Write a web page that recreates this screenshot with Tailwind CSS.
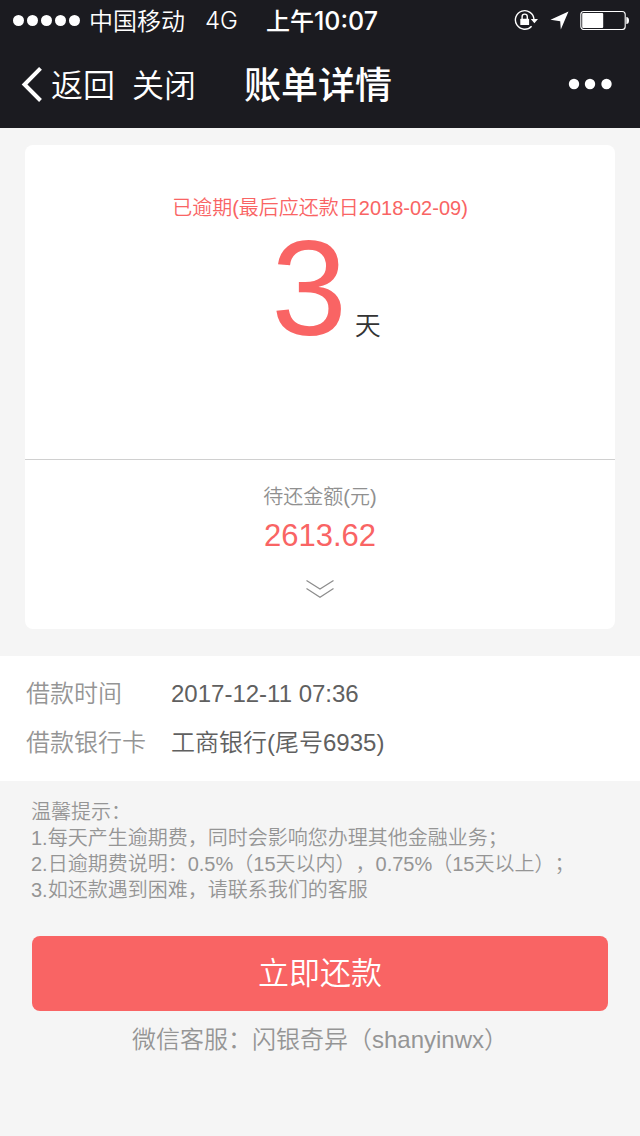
<!DOCTYPE html>
<html lang="zh-CN">
<head>
<meta charset="utf-8">
<meta name="viewport" content="width=device-width, initial-scale=1">
<title>账单详情</title>
<script src="https://cdn.jsdelivr.net/npm/@tailwindcss/browser@4"></script>
</head>
<body class="flex min-h-screen flex-col bg-[#f5f5f5] font-['Liberation_Sans','Noto_Sans_CJK_SC',sans-serif] font-[350] [text-spacing-trim:space-all]">
<header class="bg-[#1b1b20] text-white">
  <!-- status bar -->
  <div class="flex h-10 items-center px-3 font-['Inter','Noto_Sans_CJK_SC',sans-serif] text-2xl leading-8">
    <svg class="mr-2 h-3 w-[69px]" viewBox="0 0 69 12" fill="currentColor" aria-hidden="true"><circle cx="6.500" cy="6.500" r="5.500"/><circle cx="20.500" cy="6.500" r="5.500"/><circle cx="34.500" cy="6.500" r="5.500"/><circle cx="48.500" cy="6.500" r="5.500"/><circle cx="62.500" cy="6.500" r="5.500"/></svg>
    <span class="pt-1">中国移动</span>
    <span class="ml-5 pt-0.5">4G</span>
    <span class="ml-7 pt-0.5 font-medium">上午<span class="text-[25px]">10:07</span></span>
    <div class="ml-auto flex items-center">
      <svg class="h-6 w-6" viewBox="0 0 24 24" fill="none" stroke="currentColor" stroke-width="1.400" aria-hidden="true"><path d="M20 11.500A9.300 9.300 0 1 0 17.600 18.200"/><path d="M16.800 11H24L20.400 15.200Z" fill="currentColor" stroke="none"/><rect x="6.300" y="10.800" width="8.800" height="6.200" rx=".6" fill="currentColor" stroke="none"/><path d="M8.100 11V8.700a2.600 2.600 0 0 1 5.200 0V11"/></svg>
      <svg class="ml-3 h-5 w-5" viewBox="0 0 20 20" fill="currentColor" aria-hidden="true"><path d="M18.500 1.500 10.800 19.500 10.200 11.200.500 9.800Z"/></svg>
      <svg class="-mr-0.5 ml-2.5 h-5 w-[50px]" viewBox="0 0 50 20" fill="none" aria-hidden="true"><rect x=".8" y="1.500" width="44.400" height="18" rx="3" stroke="currentColor" stroke-width="1.100"/><rect x="2.200" y="3" width="21" height="15" rx="1" fill="currentColor"/><path d="M46.300 7q2.700 0 2.700 3.500t-2.700 3.500z" fill="currentColor"/></svg>
    </div>
  </div>
  <!-- navigation bar -->
  <nav class="grid h-22 grid-cols-[1fr_auto_1fr] items-center px-5">
    <div class="flex items-center text-[32px] leading-10">
      <button type="button" class="flex items-center gap-2">
        <svg class="h-9 w-[23px]" viewBox="0 0 23 36" fill="none" stroke="currentColor" stroke-width="4" aria-hidden="true"><path d="M20.500 2.300 4.500 18.500 20.500 34.500"/></svg>
        <span class="pt-1">返回</span>
      </button>
      <button type="button" class="ml-[17px] pt-1">关闭</button>
    </div>
    <h1 class="pt-1.5 pr-1 text-[37px] leading-12 font-medium">账单详情</h1>
    <button type="button" class="justify-self-end pr-2" aria-label="更多">
      <svg class="h-3 w-11" viewBox="0 0 44 12" fill="currentColor"><circle cx="6" cy="6" r="5.200"/><circle cx="22" cy="6" r="5.200"/><circle cx="38.500" cy="6" r="5.200"/></svg>
    </button>
  </nav>
</header>

<main class="flex-1">
  <section class="mx-[25px] mt-[17px] rounded-lg bg-white text-center">
    <div class="h-[315px] border-b border-[#d0d0d0] pt-12 text-[#f96464]">
      <p class="text-xl leading-[30px]">已逾期(最后应还款日2018-02-09)</p>
      <p class="mt-[9px] flex items-baseline justify-center gap-2 pl-3"><span class="text-[136px] leading-[112px]">3</span><span class="text-[26px] leading-8 text-[#333]">天</span></p>
    </div>
    <div class="flex flex-col items-center pt-[21px] pb-[29px]">
      <p class="text-xl leading-8 text-[#909090]">待还金额(元)</p>
      <p class="text-[31px] leading-[46px] text-[#f96464]">2613.62</p>
      <button type="button" class="mt-[21px]" aria-label="展开">
        <svg class="h-5 w-7" viewBox="0 0 28 20" fill="none" stroke="#8c8c8c" stroke-width="1.200"><path d="M.500.500 14 9 27.500.500M.500 8.500 14 17.200 27.500 8.500"/></svg>
      </button>
    </div>
  </section>

  <dl class="mt-[27px] grid grid-cols-[145px_1fr] gap-y-[17px] bg-white px-[26px] pt-[22px] pb-[22px] text-2xl leading-8 text-[#606060]">
    <dt class="text-[#959595]">借款时间</dt><dd>2017-12-11 07:36</dd>
    <dt class="text-[#959595]">借款银行卡</dt><dd>工商银行(尾号6935)</dd>
  </dl>

  <section class="px-[31px] pt-[18px] text-xl leading-[26px] text-[#959595]">
    <h2>温馨提示：</h2>
    <p>1.每天产生逾期费，同时会影响您办理其他金融业务；</p>
    <p>2.日逾期费说明：0.5%（15天以内），0.75%（15天以上）；</p>
    <p>3.如还款遇到困难，请联系我们的客服</p>
  </section>

  <div class="px-8 pt-[33px]">
    <button type="button" class="h-[75px] w-full rounded-lg bg-[#f96464] text-[31px] leading-10 text-white">立即还款</button>
  </div>
  <p class="mt-[13px] text-center text-2xl leading-8 text-[#959595]">微信客服：闪银奇异（shanyinwx）</p>
</main>
</body>
</html>
